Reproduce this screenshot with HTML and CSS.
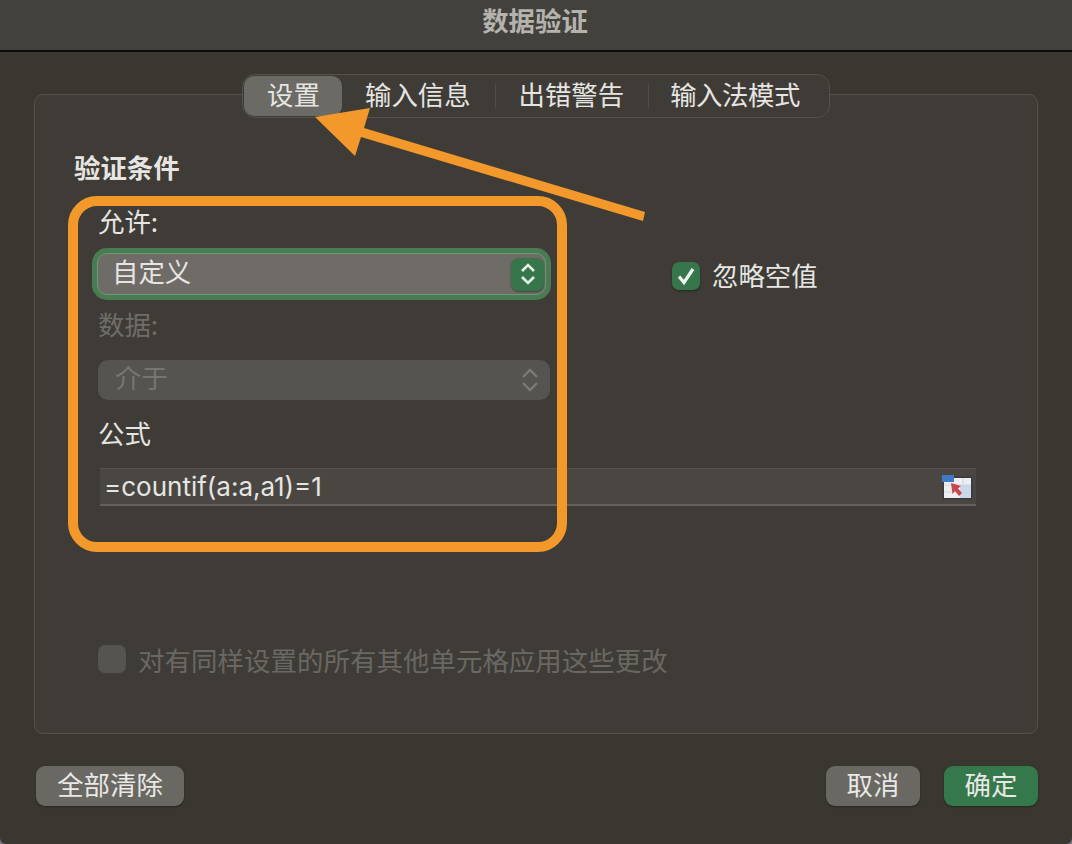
FILE: index.html
```html
<!DOCTYPE html>
<html lang="zh-CN">
<head>
	<meta charset="utf-8">
	<title>数据验证</title>
	<link rel="stylesheet" href="styles.css">
</head>
<body>
	<div class="dialog">
		<div class="titlebar">数据验证</div>

		<div class="panel">
			<div class="tabs">
				<div class="tab tab-on">设置</div>
				<div class="tab tab-info">输入信息</div>
				<div class="sep"></div>
				<div class="tab tab-error">出错警告</div>
				<div class="sep"></div>
				<div class="tab tab-ime">输入法模式</div>
			</div>

			<h2 class="heading">验证条件</h2>

			<div class="rule">
				<div class="rule-left">
					<div class="label label-allow">允许:</div>
					<div class="select select-focus">
						<span class="select-text">自定义</span>
						<div class="stepper">
							<svg width="20" height="26" viewBox="0 0 20 26"><path d="M4 10l6-6 6 6M4 16l6 6 6-6" fill="none" stroke="#e4efe6" stroke-width="2.6"/></svg>
						</div>
					</div>
					<div class="label label-off label-data">数据:</div>
					<div class="select select-off">
						<span class="select-text">介于</span>
						<svg width="18" height="26" viewBox="0 0 18 26"><path d="M2 10l7-7 7 7M2 16l7 7 7-7" fill="none" stroke="#7d7a75" stroke-width="2.4"/></svg>
					</div>
					<div class="label label-formula">公式</div>
				</div>
				<label class="check check-blank">
					<span class="box box-on">
						<svg width="22" height="22" viewBox="0 0 22 22"><path d="M4 11.5l5 6L18 4" fill="none" stroke="#eef3ef" stroke-width="3.2"/></svg>
					</span>
					<span class="check-text">忽略空值</span>
				</label>
			</div>

			<div class="formula">
				<span>=countif(a:a,a1)=1</span>
				<svg class="picker" width="31" height="26" viewBox="0 0 31 26">
					<rect x="0.5" y="2.5" width="30" height="23" fill="#3a3a3c"/>
					<rect x="2" y="4" width="27" height="20" fill="#eceef2"/>
					<path d="M21 4v20M2 11h27M2 18h27" stroke="#cfd6df" stroke-width="1"/>
					<rect x="18" y="11" width="11" height="13" fill="#c9d9ea"/>
					<rect x="0" y="1" width="12" height="7" fill="#3f79c8"/>
					<path d="M9 9l10 3-3 2.500 4 4.500-3 3-4-5-2.500 3z" fill="#c8474a"/>
				</svg>
			</div>

			<label class="check check-apply">
				<span class="box box-off"></span>
				<span class="check-text">对有同样设置的所有其他单元格应用这些更改</span>
			</label>
		</div>

		<div class="footer">
			<button class="btn btn-clear">全部清除</button>
			<div class="footer-right">
				<button class="btn btn-cancel">取消</button>
				<button class="btn btn-ok">确定</button>
			</div>
		</div>
	</div>

	<!-- orange annotation drawn over the screenshot -->
	<svg class="notes" width="1072" height="844" viewBox="0 0 1072 844">
		<rect x="73" y="201" width="489" height="346" rx="24" fill="none" stroke="#f3982b" stroke-width="10"/>
		<path d="M315 117L370 108 364 128 645 212 643 221 361 137 355 156z" fill="#f3982b"/>
	</svg>
</body>
</html>
```

FILE: styles.css
```css
html, body {
	margin: 0;
	padding: 0;
}

body {
	background-color: #77767a;
	font-family: "Noto Sans CJK SC", "Liberation Sans", sans-serif;
	font-size: 26.4px;
	color: #e6e5e2;
}

.dialog {
	position: relative;
	width: 1072px;
	height: 844px;
	overflow: hidden;
	background-color: #3a3731;
	border-radius: 0 0 6px 6px;
}

.titlebar {
	height: 50px;
	padding-right: 2px;
	line-height: 39px;
	text-align: center;
	font-weight: 700;
	color: #b5b3ae;
	background-color: #43413c;
	border-bottom: 2px solid #0e0d0b;
}

.panel {
	height: 640px;
	margin: 42px 34px 0;
	box-sizing: border-box;
	border: 1px solid #54514c;
	border-radius: 9px;
	background-color: #3f3c37;
}

.tabs {
	display: flex;
	align-items: center;
	width: 588px;
	height: 44px;
	box-sizing: border-box;
	margin: -21px auto 0;
	border: 1px solid #54514c;
	border-radius: 13px;
	background-color: #3f3c37;
}

.tab {
	line-height: 36px;
	height: 40px;
	white-space: nowrap;
}

.tab-on {
	width: 97px;
	margin-left: 1px;
	padding-left: 1px;
	text-align: center;
	background-color: #6c6a65;
	border-radius: 10px;
}

.tab-info,
.tab-error {
	margin-left: 23px;
}

.tab-ime {
	margin-left: 21px;
	letter-spacing: -0.4px;
}

.sep {
	width: 1px;
	height: 24px;
	margin-left: 24px;
	background-color: #4f4c47;
}

.heading {
	margin: 30px 0 0 39px;
	font-size: 26.4px;
	font-weight: 700;
	line-height: 38px;
}

.rule {
	display: flex;
	margin: 17px 0 0 56px;
}

.rule-left {
	width: 458px;
}

.label {
	margin-left: 7px;
	line-height: 38px;
}

.label-allow {
	margin-top: -1px;
}

.label-off {
	color: #6f6d68;
}

.label-data {
	margin-top: 10px;
}

.label-formula {
	margin-top: 14px;
}

.select {
	display: flex;
	align-items: center;
	justify-content: space-between;
	box-sizing: border-box;
	border-radius: 10px;
}

.select-text {
	margin-bottom: 7px;
}

.select-focus {
	width: 449px;
	height: 42px;
	margin: 13px 0 0 6px;
	padding: 0 1px 0 14px;
	background-color: #6f6c67;
	border: 1px solid #6b9a76;
	box-shadow: 0 0 0 5px #4a7c54;
}

.stepper {
	display: flex;
	align-items: center;
	justify-content: center;
	width: 33px;
	height: 33px;
	border-radius: 8px;
	background-color: #37764b;
	box-shadow: 0 1px 2px rgba(0, 0, 0, 0.4);
}

.select-off {
	width: 452px;
	height: 40px;
	margin: 17px 0 0 7px;
	padding: 0 11px 0 17px;
	background-color: #565450;
	color: #777570;
}

.check {
	display: flex;
	align-items: center;
	gap: 12px;
}

.check-blank {
	height: 28px;
	margin: 59px 0 0 123px;
}

.check-blank .check-text {
	margin-bottom: 4px;
}

.box {
	display: flex;
	align-items: center;
	justify-content: center;
	width: 28px;
	height: 28px;
	border-radius: 7px;
}

.box-on {
	background-color: #37764b;
	box-shadow: 0 1px 2px rgba(0, 0, 0, 0.4);
}

.box-off {
	background-color: #565450;
}

.formula {
	display: flex;
	align-items: center;
	justify-content: space-between;
	box-sizing: border-box;
	width: 876px;
	height: 38px;
	margin: 16px 0 0 65px;
	padding: 0 3px 0 4px;
	background-color: #4a4742;
	border-top: 1px solid #55524d;
	border-bottom: 2px solid #65625d;
	font-family: "Inter", "Liberation Sans", sans-serif;
	font-size: 26px;
}

.check-apply {
	height: 28px;
	margin: 139px 0 0 63px;
	color: #6a6863;
	letter-spacing: 0.1px;
}

.footer {
	display: flex;
	justify-content: space-between;
	margin: 32px 34px 0 36px;
}

.footer-right {
	display: flex;
	gap: 24px;
}

.btn {
	height: 40px;
	padding: 0 0 5px;
	border: 0;
	border-radius: 9px;
	background-color: #6a6863;
	color: #e9e8e5;
	font-family: inherit;
	font-size: 26.4px;
	line-height: 34px;
	box-shadow: 0 1px 2px rgba(0, 0, 0, 0.35);
}

.btn-clear {
	width: 148px;
}

.btn-cancel,
.btn-ok {
	width: 94px;
}

.btn-ok {
	background-color: #35784b;
}

.notes {
	position: absolute;
	left: 0;
	top: 0;
}
```
